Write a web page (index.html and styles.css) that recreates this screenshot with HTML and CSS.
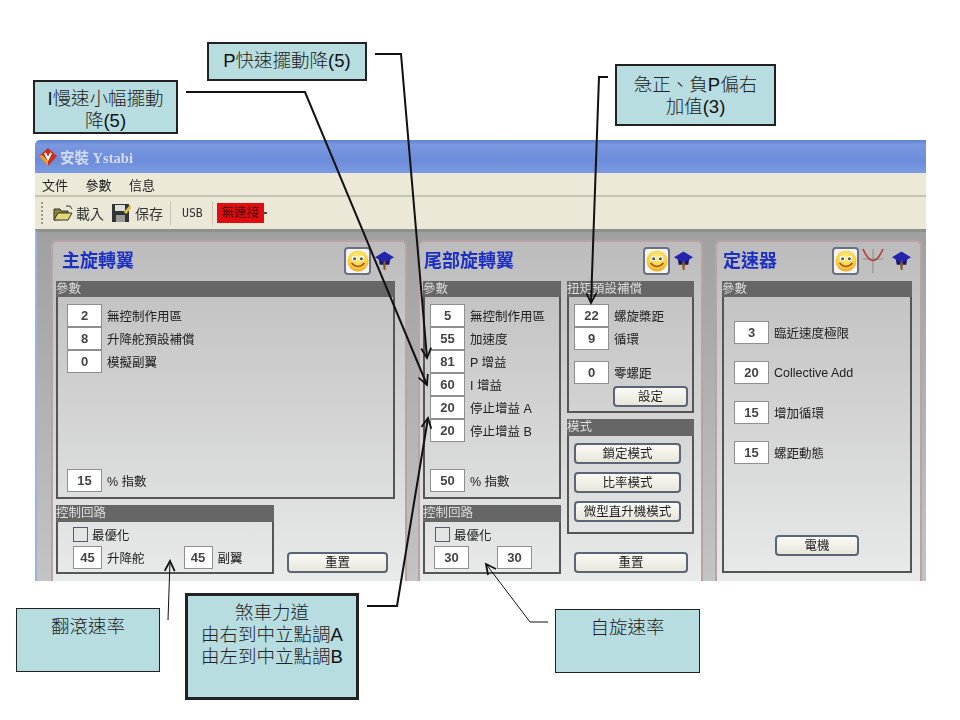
FILE: index.html
```html
<!DOCTYPE html>
<html lang="zh-Hant">
<head>
    <meta charset="UTF-8">
    <meta name="viewport" content="width=device-width, initial-scale=1.0">
    <title>安裝 Ystabi</title>
    <link rel="stylesheet" href="styles.css">
</head>
<body>
<div class="stage">
    <svg width="0" height="0" class="defs">
        <defs>
            <radialGradient id="face" cx="50%" cy="35%" r="70%">
                <stop offset="0%" stop-color="#fdf08c"/>
                <stop offset="65%" stop-color="#f8d040"/>
                <stop offset="100%" stop-color="#e89a24"/>
            </radialGradient>
            <symbol id="smile" viewBox="0 0 22 22">
                <circle cx="11" cy="11" r="10.5" fill="url(#face)"/>
                <circle cx="7.4" cy="8.4" r="2.6" fill="#fff"/>
                <circle cx="14.6" cy="8.4" r="2.6" fill="#fff"/>
                <circle cx="7.6" cy="8.8" r="1.5" fill="#554"/>
                <circle cx="14.4" cy="8.8" r="1.5" fill="#554"/>
                <path d="M4.5 13 Q11 20 17.5 13" fill="none" stroke="#a5541a" stroke-width="1.6"/>
            </symbol>
            <symbol id="hat" viewBox="0 0 20 20">
                <path d="M4 8 L16 8 L15 14 L5 14 Z" fill="#15156a"/>
                <path d="M10 0 L20 6 L10 12 L0 6 Z" fill="#2424ac"/>
                <path d="M10 9 L8.5 13 L9 19 L11 20 L11.5 13 Z" fill="#8a5a22"/>
            </symbol>
        </defs>
    </svg>

    <div class="window">
        <div class="titlebar">
            <svg class="app-icon" width="18" height="18" viewBox="0 0 18 18">
                <path d="M9 0 L18 8 L9 18 L0 8 Z" fill="#c8301c"/>
                <path d="M0 8 L9 18 L9 13 L3 7 Z" fill="#e8a030"/>
                <path d="M6 5 L9 11 L12 5" fill="none" stroke="#fff" stroke-width="2"/>
            </svg>
            <span class="title-text">安裝 Ystabi</span>
        </div>
        <div class="menubar">
            <span>文件</span>
            <span>參數</span>
            <span>信息</span>
        </div>
        <div class="toolbar">
            <span class="grip"></span>
            <svg class="tool-icon" width="20" height="16" viewBox="0 0 20 16">
                <path d="M1 4 L7 4 L8 6 L15 6 L15 14 L1 15 Z" fill="#8a8430" stroke="#333"/>
                <path d="M1 15 L5 8 L19 8 L15 15 Z" fill="#e6d878" stroke="#333"/>
                <path d="M13 1 L17 1 M17 1 L19 4" stroke="#333" fill="none"/>
            </svg>
            <span class="tool-label">載入</span>
            <svg class="tool-icon save-icon" width="19" height="18" viewBox="0 0 19 18">
                <rect x="0" y="0" width="17" height="18" fill="#333"/>
                <rect x="3" y="1" width="10" height="6" fill="#ddd"/>
                <rect x="4" y="11" width="9" height="7" fill="#999"/>
                <path d="M13 9 L19 2" stroke="#d8c040" stroke-width="3"/>
            </svg>
            <span class="tool-label">保存</span>
            <span class="tool-sep"></span>
            <span class="usb">USB</span>
            <span class="tool-sep short"></span>
            <span class="status">無連接</span>
            <span class="status-dot"></span>
        </div>
        <div class="content">
            <section class="panel panel-main">
                <div class="panel-head">
                    <h2>主旋轉翼</h2>
                    <span class="smile-btn"><svg width="22" height="22"><use href="#smile"/></svg></span>
                    <svg class="hat" width="19" height="20"><use href="#hat"/></svg>
                </div>
                <div class="group params-main">
                    <div class="group-title">參數</div>
                    <div class="group-body fields">
                        <div class="field"><span class="num">2</span><label>無控制作用區</label></div>
                        <div class="field"><span class="num">8</span><label>升降舵預設補償</label></div>
                        <div class="field"><span class="num">0</span><label>模擬副翼</label></div>
                        <div class="field last"><span class="num">15</span><label>% 指數</label></div>
                    </div>
                </div>
                <div class="bottom-row">
                    <div class="group loop loop-main">
                        <div class="group-title">控制回路</div>
                        <div class="group-body">
                            <div class="check"><span class="box"></span>最優化</div>
                            <div class="field"><span class="num small">45</span><label>升降舵</label><span class="num small second">45</span><label>副翼</label></div>
                        </div>
                    </div>
                    <button class="btn reset-main">重置</button>
                </div>
            </section>

            <section class="panel panel-tail">
                <div class="panel-head">
                    <h2>尾部旋轉翼</h2>
                    <span class="smile-btn"><svg width="22" height="22"><use href="#smile"/></svg></span>
                    <svg class="hat" width="19" height="20"><use href="#hat"/></svg>
                </div>
                <div class="tail-cols">
                    <div class="tail-left">
                        <div class="group params-tail">
                            <div class="group-title">參數</div>
                            <div class="group-body fields">
                                <div class="field"><span class="num">5</span><label>無控制作用區</label></div>
                                <div class="field"><span class="num">55</span><label>加速度</label></div>
                                <div class="field"><span class="num">81</span><label>P 增益</label></div>
                                <div class="field"><span class="num">60</span><label>I 增益</label></div>
                                <div class="field"><span class="num">20</span><label>停止增益 A</label></div>
                                <div class="field"><span class="num">20</span><label>停止增益 B</label></div>
                                <div class="field last"><span class="num">50</span><label>% 指數</label></div>
                            </div>
                        </div>
                        <div class="group loop loop-tail">
                            <div class="group-title">控制回路</div>
                            <div class="group-body">
                                <div class="check"><span class="box"></span>最優化</div>
                                <div class="field"><span class="num">30</span><span class="num second">30</span></div>
                            </div>
                        </div>
                    </div>
                    <div class="tail-right">
                        <div class="group torque">
                            <div class="group-title">扭矩預設補償</div>
                            <div class="group-body">
                                <div class="field"><span class="num">22</span><label>螺旋槳距</label></div>
                                <div class="field"><span class="num">9</span><label>循環</label></div>
                                <div class="field zero"><span class="num">0</span><label>零螺距</label></div>
                                <button class="btn set-btn">設定</button>
                            </div>
                        </div>
                        <div class="group modes">
                            <div class="group-title">模式</div>
                            <div class="group-body">
                                <button class="btn">鎖定模式</button>
                                <button class="btn">比率模式</button>
                                <button class="btn">微型直升機模式</button>
                            </div>
                        </div>
                        <button class="btn reset-tail">重置</button>
                    </div>
                </div>
            </section>

            <section class="panel panel-gov">
                <div class="panel-head">
                    <h2>定速器</h2>
                    <span class="smile-btn"><svg width="22" height="22"><use href="#smile"/></svg></span>
                    <svg class="fork" width="24" height="26" viewBox="0 0 24 26">
                        <path d="M12 1 V25 M2 11 H22" stroke="#8a8a8a" fill="none"/>
                        <path d="M2 1 Q12 24 22 1" stroke="#b5403a" fill="none" stroke-width="1.7"/>
                    </svg>
                    <svg class="hat" width="19" height="20"><use href="#hat"/></svg>
                </div>
                <div class="group params-gov">
                    <div class="group-title">參數</div>
                    <div class="group-body">
                        <div class="gov-rows">
                            <div class="field"><span class="num">3</span><label>臨近速度極限</label></div>
                            <div class="field"><span class="num">20</span><label>Collective Add</label></div>
                            <div class="field"><span class="num">15</span><label>增加循環</label></div>
                            <div class="field"><span class="num">15</span><label>螺距動態</label></div>
                        </div>
                        <button class="btn motor-btn">電機</button>
                    </div>
                </div>
            </section>
        </div>
    </div>

    <!-- annotations over the screenshot -->
    <svg class="arrows" width="960" height="720" viewBox="0 0 960 720">
        <defs>
            <marker id="head" markerUnits="userSpaceOnUse" markerWidth="14" markerHeight="14" refX="11" refY="6" orient="auto">
                <path d="M1 1 L11 6 L1 11" fill="none" stroke="#111" stroke-width="1.8"/>
            </marker>
        </defs>
        <polyline class="thick" points="375,54 401,54 427,358" marker-end="url(#head)"/>
        <polyline class="thick" points="186,92 305,92 427,385" marker-end="url(#head)"/>
        <polyline class="thick" points="367,606 397,606 428,418" marker-end="url(#head)"/>
        <polyline class="thick" points="608,77 599,77 591,303" marker-end="url(#head)"/>
        <polyline class="thin" points="168,620 170,561" marker-end="url(#head)"/>
        <polyline class="thin" points="548,622 530,622 486,564" marker-end="url(#head)"/>
    </svg>

    <div class="callout c-p"><span class="latin">P</span>快速擺動降<span class="latin">(5)</span></div>
    <div class="callout c-i"><span class="latin">I</span>慢速小幅擺動<br>降<span class="latin">(5)</span></div>
    <div class="callout c-ji">急正、負<span class="latin">P</span>偏右<br>加值<span class="latin">(3)</span></div>
    <div class="callout thin-box c-roll">翻滾速率</div>
    <div class="callout c-brake">煞車力道<br>由右到中立點調<span class="latin">A</span><br>由左到中立點調<span class="latin">B</span></div>
    <div class="callout thin-box c-yaw">自旋速率</div>
</div>
</body>
</html>
```

FILE: styles.css
```css
body {
    margin: 0;
    padding: 0;
    background-color: #fff;
    font-family: "Liberation Sans", "Noto Sans CJK TC", sans-serif;
    color: #333;
}
.stage {
    position: relative;
    width: 960px;
    height: 720px;
    overflow: hidden;
    padding-top: 140px;
    box-sizing: border-box;
}
.defs {
    position: absolute;
}

/* window */
.window {
    width: 891px;
    height: 441px;
    margin-left: 35px;
    overflow: hidden;
    border-radius: 5px 0 0 0;
    filter: blur(0.4px);
}
.titlebar {
    display: flex;
    align-items: center;
    height: 33px;
    padding-left: 4px;
    box-sizing: border-box;
    background: linear-gradient(#5f83cf, #7b98e0 15%, #6c8cdb 60%, #7b9be2);
}
.app-icon {
    margin-right: 3px;
}
.title-text {
    font-family: "Liberation Serif", "Noto Sans CJK TC", serif;
    font-size: 14.5px;
    font-weight: bold;
    color: #d4dcf4;
}
.menubar {
    display: flex;
    gap: 17.5px;
    align-items: center;
    height: 22px;
    padding-left: 7px;
    background-color: #ece9d8;
    border-bottom: 2px solid #c6c5b4;
    font-size: 13px;
    color: #222;
}
.toolbar {
    display: flex;
    align-items: center;
    height: 32px;
    padding-left: 6px;
    background-color: #ebe8d7;
    font-size: 14px;
    color: #333;
}
.grip {
    width: 1px;
    height: 22px;
    margin-right: 9px;
    border-left: 2px dotted #999;
}
.tool-icon {
    margin-right: 3px;
}
.tool-label {
    margin-right: 7px;
}
.save-icon {
    margin: 0 4px 0 1px;
}
.tool-sep {
    width: 1px;
    height: 24px;
    margin: 0 11px 0 0;
    background-color: #c9c6b4;
}
.tool-sep.short {
    margin: 0 4px 0 5px;
}
.usb {
    font-family: "DejaVu Sans Mono", monospace;
    font-size: 11.5px;
    width: 25px;
}
.status {
    width: 47px;
    height: 20px;
    line-height: 20px;
    text-align: center;
    background-color: #e00c10;
    color: #400;
    font-size: 12.5px;
}
.status-dot {
    width: 3px;
    height: 2px;
    background-color: #444;
}

/* panels */
.content {
    display: flex;
    gap: 11px;
    height: 354px;
    padding: 8px 0 0 14px;
    border-left: 2px solid #9db4d8;
    border-top: 3px solid #8b918c;
    box-sizing: border-box;
    background: linear-gradient(#a0a0a0, #c4c4c4);
}
.panel {
    height: 400px;
    padding: 5px 3px 0;
    box-sizing: border-box;
    border: 2px solid #b9a3a6;
    border-radius: 6px;
    background: linear-gradient(#bcbcbc, #e9eaea 340px);
}
.panel-main {
    width: 356px;
}
.panel-tail {
    width: 285px;
}
.panel-gov {
    width: 207px;
    margin-left: 1px;
    padding-left: 5px;
}
.panel-head {
    display: flex;
    align-items: center;
    height: 28px;
    margin-bottom: 6px;
}
.panel-head h2 {
    flex: 1;
    margin: 0 0 0 6px;
    font-size: 18px;
    line-height: 28px;
    color: #1c2fc4;
}
.panel-tail .panel-head h2 {
    margin-left: 1px;
}
.panel-gov .panel-head h2 {
    margin-left: 1px;
}
.smile-btn {
    display: flex;
    align-items: center;
    justify-content: center;
    width: 27px;
    height: 28px;
    box-sizing: border-box;
    border: 2px solid #6a7186;
    border-radius: 4px;
    background-color: #f4f4f0;
}
.hat {
    margin: 0 2px 0 4px;
}
.panel-main .hat {
    margin-right: 8px;
}
.panel-tail .hat {
    margin-right: 5px;
}
.panel-gov .hat {
    margin: 0 6px 0 7px;
}
.fork {
    margin-left: 2px;
}

/* groups */
.group-title {
    height: 16px;
    line-height: 16px;
    font-size: 12.5px;
    color: #ddd;
    background-color: #666;
    white-space: nowrap;
    overflow: hidden;
}
.group-body {
    padding: 7px 0 0 9px;
    border: 2px solid #555;
    border-top: none;
    box-sizing: border-box;
}
.field {
    display: flex;
    align-items: center;
    height: 23px;
    font-size: 12.5px;
    color: #222;
}
.num {
    display: block;
    width: 35px;
    height: 23px;
    margin-right: 5px;
    line-height: 21px;
    box-sizing: border-box;
    border: 1px solid #8f8f8f;
    background-color: #fff;
    text-align: center;
    font-size: 13px;
    font-weight: bold;
    color: #444;
}
.num.small {
    width: 29px;
}
.fields {
    display: flex;
    flex-direction: column;
    height: 202px;
    padding-bottom: 5px;
}
.field.last {
    margin-top: auto;
}
.params-main {
    width: 339px;
}

/* control loop */
.bottom-row {
    display: flex;
    align-items: flex-end;
    gap: 13px;
    margin-top: 6px;
}
.loop .group-title {
    height: 17px;
}
.loop .group-body {
    height: 52px;
    padding: 5px 0 0 15px;
}
.loop .field {
    margin-top: 4px;
}
.loop-main {
    width: 218px;
}
.loop-main .second {
    margin-left: 39px;
}
.loop-tail .second {
    margin-left: 23px;
}
.check {
    display: flex;
    align-items: center;
    gap: 4px;
    height: 15px;
    font-size: 12.5px;
    color: #222;
}
.box {
    width: 15px;
    height: 15px;
    box-sizing: border-box;
    border: 1px solid #555a70;
    background-color: #e4e4e4;
}

/* buttons */
.btn {
    display: block;
    height: 21px;
    padding: 0;
    box-sizing: border-box;
    border: 2px solid #5c6478;
    border-radius: 4px;
    background: linear-gradient(#fafaf6, #e8e6da);
    font-family: inherit;
    font-size: 12.5px;
    line-height: 16px;
    color: #222;
}
.reset-main {
    width: 101px;
    margin-bottom: 1px;
}

/* tail panel columns */
.tail-cols {
    display: flex;
    gap: 6px;
}
.tail-left {
    width: 138px;
}
.tail-right {
    width: 127px;
}
.params-tail .group-body {
    padding-left: 5px;
}
.loop-tail {
    margin-top: 6px;
}
.loop-tail .group-body {
    padding-left: 9px;
}
.loop-tail .check {
    margin-left: 1px;
}
.torque .group-body {
    height: 116px;
    padding-left: 5px;
}
.field.zero {
    margin-top: 11px;
}
.set-btn {
    width: 75px;
    margin: 2px 0 0 39px;
}
.modes {
    margin-top: 6px;
}
.modes .group-title {
    height: 17px;
}
.modes .group-body {
    display: flex;
    flex-direction: column;
    gap: 8px;
    height: 98px;
    padding-left: 5px;
}
.modes .btn {
    width: 107px;
}
.reset-tail {
    width: 114px;
    margin: 18px 0 0 7px;
}

/* governor panel */
.params-gov {
    width: 190px;
}
.params-gov .group-body {
    height: 276px;
    padding: 24px 0 0 10px;
}
.gov-rows {
    display: flex;
    flex-direction: column;
    gap: 17px;
}
.motor-btn {
    width: 84px;
    margin: 71px 0 0 41px;
}

/* annotations */
.arrows {
    position: absolute;
    left: 0;
    top: 0;
}
.arrows polyline {
    fill: none;
    stroke: #111;
}
.arrows .thick {
    stroke-width: 2;
}
.arrows .thin {
    stroke-width: 1;
}
.callout {
    position: absolute;
    box-sizing: border-box;
    border: 2px solid #222;
    background-color: #b7dde1;
    text-align: center;
    font-size: 18.5px;
    font-weight: 300;
    line-height: 22px;
    color: #222;
}
.callout .latin {
    font-weight: 400;
    color: #111;
}
.thin-box {
    border-width: 1px;
    padding-top: 7px;
}
.c-p {
    left: 207px;
    top: 42px;
    width: 160px;
    height: 39px;
    padding-top: 6px;
}
.c-i {
    left: 33px;
    top: 80px;
    width: 145px;
    height: 54px;
    padding-top: 6px;
}
.c-ji {
    left: 615px;
    top: 64px;
    width: 161px;
    height: 62px;
    padding-top: 8px;
}
.c-roll {
    left: 16px;
    top: 608px;
    width: 144px;
    height: 64px;
}
.c-brake {
    left: 185px;
    top: 593px;
    width: 174px;
    height: 107px;
    border-width: 3px;
    padding-top: 6px;
}
.c-yaw {
    left: 555px;
    top: 609px;
    width: 145px;
    height: 64px;
}
```
